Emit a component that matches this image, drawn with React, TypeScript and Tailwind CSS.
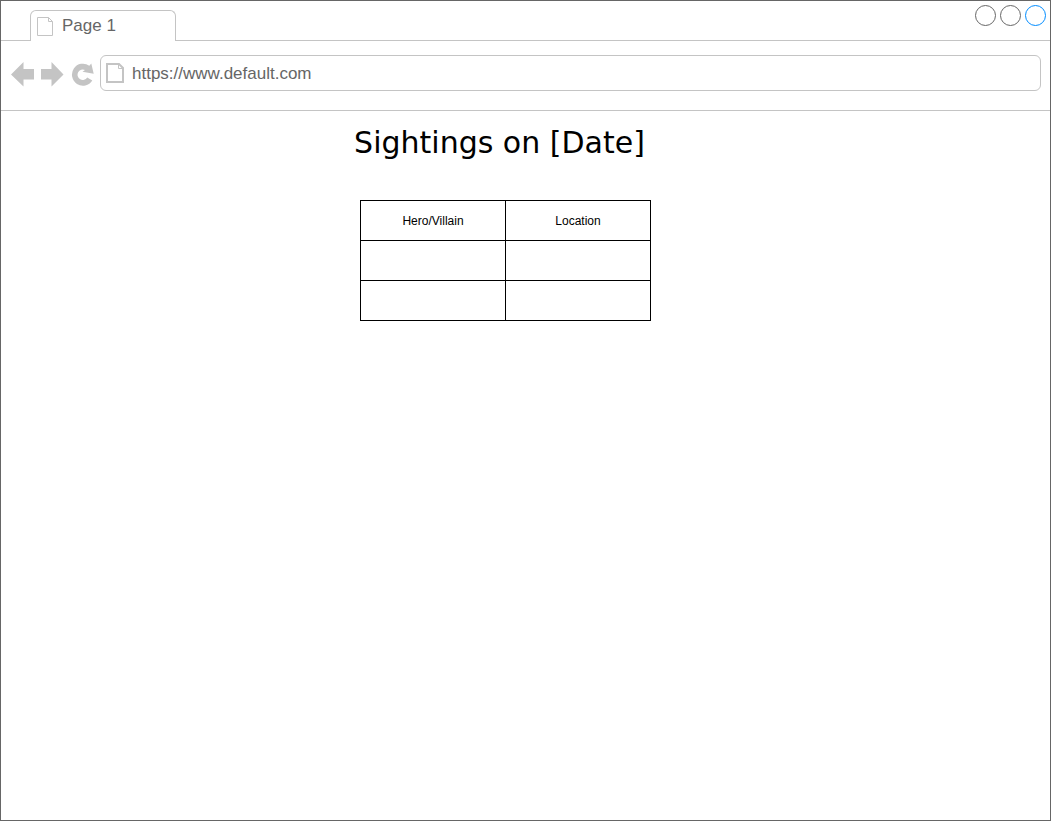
import type { ReactNode } from "react";

const columns = ["Hero/Villain", "Location"];
const rows = [
  { id: 1, name: "", location: "" },
  { id: 2, name: "", location: "" },
];

function NavButton({ label, children }: { label: string; children: ReactNode }) {
  return (
    <button type="button" aria-label={label} className="h-7 w-6 shrink-0 text-[#c4c4c4]">
      <svg viewBox="0 0 24 28" className="block h-7 w-6" fill="currentColor" aria-hidden="true">
        {children}
      </svg>
    </button>
  );
}

function TabBar() {
  return (
    <header className="flex h-10 justify-between">
      <div className="w-[29px] shrink-0 border-b border-[#c4c4c4]" />
      <div className="mt-[9px] flex w-[146px] shrink-0 items-center gap-2 rounded-t-md border border-b-0 border-[#c4c4c4] pl-[6px]">
        <svg viewBox="0 0 17 20" className="h-5 w-[17px]" fill="none" stroke="#c4c4c4" aria-hidden="true">
          <path d="M.5 1.5H11.500L15.500 5.500V19.500H.5Z M11.500 1.500V5.500H15.500" />
        </svg>
        <span className="text-[17px] leading-5">Page 1</span>
      </div>
      <div className="flex flex-1 items-start justify-end gap-1 border-b border-[#c4c4c4] pt-1 pr-1">
        <button type="button" aria-label="Minimize" className="size-[21px] rounded-full border border-[#666666]" />
        <button type="button" aria-label="Maximize" className="size-[21px] rounded-full border border-[#666666]" />
        <button type="button" aria-label="Close" className="size-[21px] rounded-full border border-[#008cff]" />
      </div>
    </header>
  );
}

function Toolbar() {
  return (
    <nav className="flex items-center gap-[6px] border-b border-[#c4c4c4] px-[9px] pt-[14px] pb-[19px]">
      <NavButton label="Back">
        <path d="M1 15.500L13.500 3V10H24V20.500H13.500V27.500Z" />
      </NavButton>
      <NavButton label="Forward">
        <path d="M23.500 15.500L11.500 3V10H1V20.500H11.500V27.500Z" />
      </NavButton>
      <NavButton label="Reload">
        <path d="M19.300 6.700A11 11 0 1 0 22.300 21.500L17.200 18.400A5.200 5.200 0 1 1 15 11L12.500 12.800L23.700 14.800L21.300 4.500Z" />
      </NavButton>
      <label className="flex h-9 min-w-0 flex-1 items-center gap-[6px] rounded-md border border-[#c4c4c4] pl-[5px]">
        <svg viewBox="0 0 20 22" className="h-[22px] w-5 shrink-0" fill="none" stroke="#c4c4c4" aria-hidden="true">
          <path strokeWidth="2" d="M1 2H13L17 6V20H1Z" />
          <path d="M12.500 2V6.500H17" />
        </svg>
        <input
          type="text"
          aria-label="Address"
          defaultValue="https://www.default.com"
          className="min-w-0 flex-1 bg-transparent pt-px text-[17px] leading-6 outline-none"
        />
      </label>
    </nav>
  );
}

export default function App() {
  return (
    <div className="flex min-h-screen flex-col border border-[#666666] bg-white font-['Liberation_Sans',Arial,sans-serif] text-[#666666]">
      <TabBar />
      <Toolbar />
      <main className="flex flex-1 flex-col items-center pt-3 pr-10 text-black">
        <h1 className="pr-3 font-['DejaVu_Sans',Verdana,sans-serif] text-[30px] leading-10">Sightings on [Date]</h1>
        <table className="mt-[37px] w-[291px] table-fixed border-collapse text-xs">
          <thead>
            <tr className="h-10">
              {columns.map((column) => (
                <th key={column} scope="col" className="border border-black p-0 text-center font-normal">
                  {column}
                </th>
              ))}
            </tr>
          </thead>
          <tbody>
            {rows.map((row) => (
              <tr key={row.id} className="h-10">
                <td className="border border-black p-0">{row.name}</td>
                <td className="border border-black p-0">{row.location}</td>
              </tr>
            ))}
          </tbody>
        </table>
      </main>
    </div>
  );
}
